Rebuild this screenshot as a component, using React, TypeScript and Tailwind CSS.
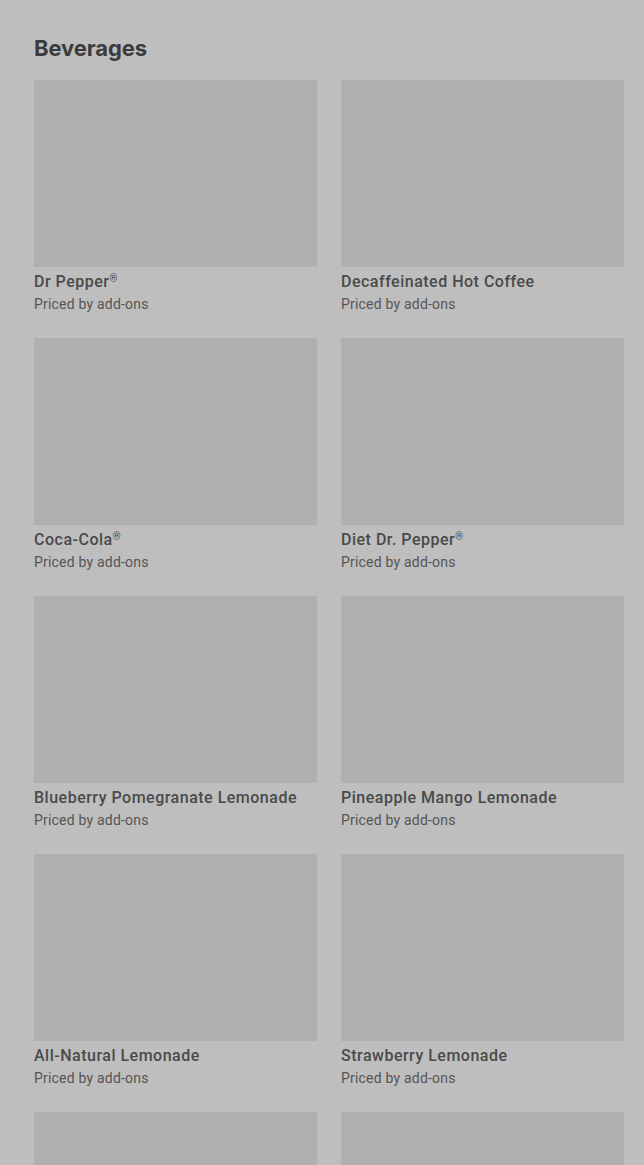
const items = [
  'Dr Pepper®',
  'Decaffeinated Hot Coffee',
  'Coca-Cola®',
  'Diet Dr. Pepper®',
  'Blueberry Pomegranate Lemonade',
  'Pineapple Mango Lemonade',
  'All-Natural Lemonade',
  'Strawberry Lemonade',
];

// ® is drawn small and raised, as on the menu
const renderName = (name: string) => {
  if (!name.endsWith('®')) return name;
  return (
    <>
      {name.slice(0, -1)}
      <span className="relative -top-[5px] text-[10px] leading-none">®</span>
    </>
  );
};

export default function App() {
  return (
    <div className="h-screen overflow-hidden bg-[#bebebe] pl-[34px] pr-[20px] pt-[34px] font-['Roboto',sans-serif]">
      {/* Section heading */}
      <h2 className="mb-[18px] font-['Inter',sans-serif] text-[22px] leading-[28px] font-bold tracking-[-0.1px] text-[#3b3b3b]">
        Beverages
      </h2>

      <div className="grid grid-cols-2 gap-x-6 gap-y-6">
        {items.map((name) => (
          <div key={name} className="flex flex-col">
            <div className="h-[187px] w-full bg-[#b0b0b0]" />
            <div className="mt-[5px] h-5 text-[16px] leading-5 font-medium tracking-[0.5px] text-[#4a4a4a]">
              {renderName(name)}
            </div>
            <div className="mt-[2px] text-[14px] leading-5 tracking-[0.2px] text-[#555555]">Priced by add-ons</div>
          </div>
        ))}
        {/* next row, only its photos are in view */}
        <div className="h-[187px] bg-[#b0b0b0]" />
        <div className="h-[187px] bg-[#b0b0b0]" />
      </div>
    </div>
  );
}
